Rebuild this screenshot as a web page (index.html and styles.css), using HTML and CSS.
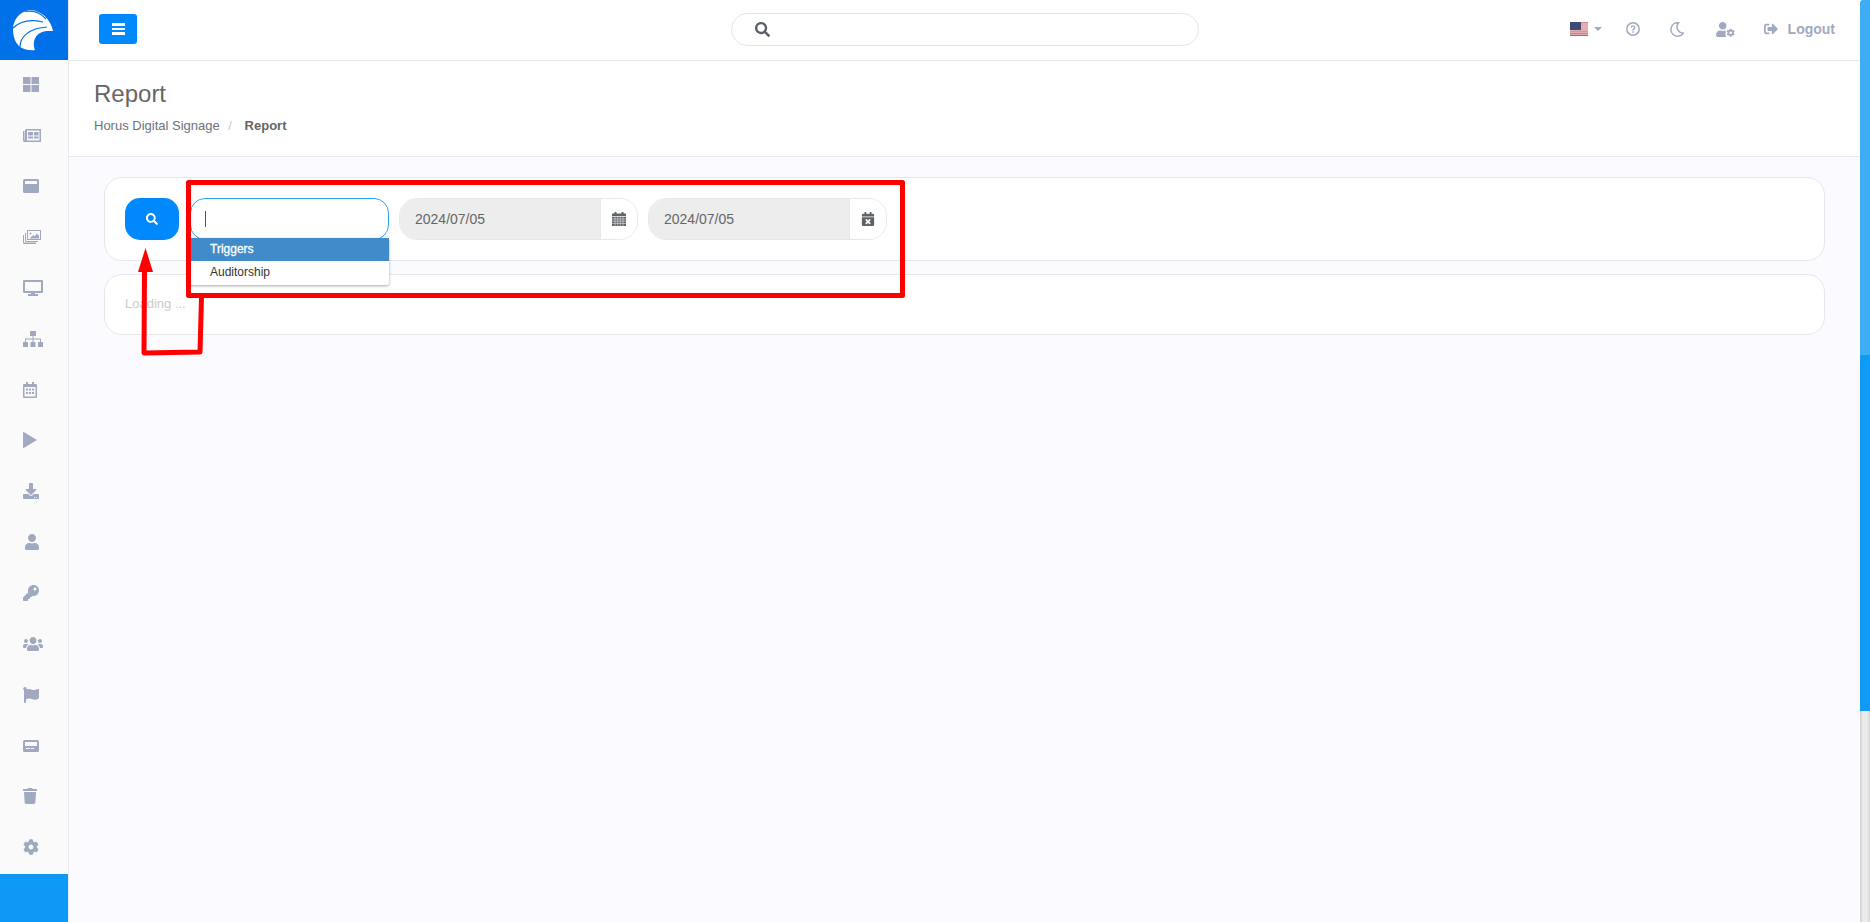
FILE: index.html
```html
<!DOCTYPE html>
<html lang="en">
<head>
<meta charset="utf-8">
<title>Report</title>
<link rel="stylesheet" href="styles.css">
</head>
<body>
<aside class="sidebar">
  <div class="logo">
    <svg class="logo-mark" viewBox="0 0 68 60">
      <path class="logo-body" d="M53 31C51 20 42 10.500 30 10 20 11 13 20 13 29c0 9 3 16 9 19 4 2 9 2.500 13 2C32 42 35 32 47 31z"/>
      <path class="logo-cut" d="M13 28C20 21 31 19 43 22"/>
      <path class="logo-cut" d="M20 47C20 37 29 28 47 27"/>
      <path class="logo-cut" d="M25 11.500C33 10 41 13 46 19"/>
    </svg>
  </div>
  <nav class="rail">
    <a class="rail-item"><svg class="ic w16" viewBox="0 0 16 15"><rect width="7.500" height="7"/><rect x="8.500" width="7.500" height="7"/><rect y="8" width="7.500" height="7"/><rect x="8.500" y="8" width="7.500" height="7"/></svg></a>
    <a class="rail-item"><svg class="ic w18" viewBox="0 0 18 13"><path d="M3 0h15v13H1.500A1.500 1.500 0 0 1 0 11.500V2h1.500v9H2V1z"/><rect class="cut" x="4" y="1.500" width="12.500" height="10"/><rect x="5" y="3" width="5" height="3.500"/><rect x="11" y="3" width="4.500" height="3.500"/><rect x="5" y="7.500" width="5" height="2"/><rect x="11" y="7.500" width="4.500" height="2"/></svg></a>
    <a class="rail-item"><svg class="ic w16" viewBox="0 0 16 14"><rect width="16" height="14" rx="1.500"/><rect class="cut" x="2" y="2" width="12" height="3"/></svg></a>
    <a class="rail-item"><svg class="ic w18" viewBox="0 0 18 14"><path d="M2 3h1v8h12v1H3.500A1.500 1.500 0 0 1 2 10.500zM0 5h1v7.500h12V14H1.500A1.500 1.500 0 0 1 0 12.500z"/><path d="M4 0h14v10H4z"/><rect class="cut" x="5" y="1" width="12" height="8"/><path d="M7 8l3-3 1.500 1.500L14 3.500 16 6v2.500H7z"/><circle cx="7.500" cy="3.500" r="1"/></svg></a>
    <a class="rail-item"><svg class="ic w20" viewBox="0 0 20 16"><path d="M1 0h18a1 1 0 0 1 1 1v11a1 1 0 0 1-1 1h-7v1h3v2H5v-2h3v-1H1a1 1 0 0 1-1-1V1a1 1 0 0 1 1-1z"/><rect class="cut" x="2" y="2" width="16" height="9"/></svg></a>
    <a class="rail-item"><svg class="ic w20" viewBox="0 0 20 16"><rect x="7" width="6" height="5"/><rect y="11" width="5" height="5"/><rect x="7.500" y="11" width="5" height="5"/><rect x="15" y="11" width="5" height="5"/><path d="M9.500 5h1v2.500H18V11h-1V8.500h-6.500V11h-1V8.500H3V11H2V7.500h7.500z"/></svg></a>
    <a class="rail-item"><svg class="ic w14" viewBox="0 0 14 16"><path d="M3 0h2v2h4V0h2v2h2a1 1 0 0 1 1 1v12a1 1 0 0 1-1 1H1a1 1 0 0 1-1-1V3a1 1 0 0 1 1-1h2z"/><rect class="cut" x="1.500" y="5" width="11" height="9.500"/><rect x="3" y="6.500" width="2" height="2"/><rect x="6" y="6.500" width="2" height="2"/><rect x="9" y="6.500" width="2" height="2"/><rect x="3" y="10" width="2" height="2"/><rect x="6" y="10" width="2" height="2"/><rect x="9" y="10" width="2" height="2"/></svg></a>
    <a class="rail-item"><svg class="ic w14" viewBox="0 0 14 16"><path d="M0 .5v15a.5.5 0 0 0 .7.4L14 8 .7.100A.5.5 0 0 0 0 .5z"/></svg></a>
    <a class="rail-item"><svg class="ic w16" viewBox="0 0 512 512"><path d="M216 0h80c13.300 0 24 10.700 24 24v168h87.700c17.800 0 26.700 21.500 14.100 34.100L269.700 378.300c-7.500 7.500-19.800 7.500-27.300 0L90.100 226.100c-12.600-12.600-3.700-34.100 14.100-34.100H192V24c0-13.300 10.700-24 24-24zm296 376v112c0 13.300-10.700 24-24 24H24c-13.300 0-24-10.700-24-24V376c0-13.300 10.700-24 24-24h146.700l49 49c20.100 20.100 52.500 20.100 72.600 0l49-49H488c13.300 0 24 10.700 24 24zm-124 88c0-11-9-20-20-20s-20 9-20 20 9 20 20 20 20-9 20-20zm64 0c0-11-9-20-20-20s-20 9-20 20 9 20 20 20 20-9 20-20z"/></svg></a>
    <a class="rail-item"><svg class="ic w14 off2" viewBox="0 0 448 512"><path d="M224 256c70.700 0 128-57.300 128-128S294.700 0 224 0 96 57.300 96 128s57.300 128 128 128zm89.600 32h-16.700c-22.200 10.200-46.900 16-72.900 16s-50.600-5.800-72.900-16h-16.700C60.200 288 0 348.200 0 422.400V464c0 26.500 21.500 48 48 48h352c26.500 0 48-21.500 48-48v-41.600c0-74.200-60.200-134.400-134.400-134.400z"/></svg></a>
    <a class="rail-item"><svg class="ic w16" viewBox="0 0 512 512"><path d="M512 176.001C512 273.203 433.202 352 336 352c-11.220 0-22.190-1.062-32.827-3.069l-24.012 27.014A23.999 23.999 0 0 1 261.223 384H224v40c0 13.255-10.745 24-24 24h-40v40c0 13.255-10.745 24-24 24H24c-13.255 0-24-10.745-24-24v-78.059c0-6.365 2.529-12.470 7.029-16.971l161.802-161.802C163.108 213.814 160 195.271 160 176 160 78.798 238.797.001 335.999 0 433.488-.001 512 78.511 512 176.001zM336 128c0 26.510 21.490 48 48 48s48-21.490 48-48-21.490-48-48-48-48 21.490-48 48z"/></svg></a>
    <a class="rail-item"><svg class="ic w20" viewBox="0 0 640 512"><path d="M96 224c35.300 0 64-28.700 64-64s-28.700-64-64-64-64 28.700-64 64 28.700 64 64 64zm448 0c35.300 0 64-28.700 64-64s-28.700-64-64-64-64 28.700-64 64 28.700 64 64 64zm32 32h-64c-17.600 0-33.500 7.100-45.100 18.600 40.300 22.100 68.900 62 75.100 109.400h66c17.700 0 32-14.300 32-32v-32c0-35.300-28.700-64-64-64zm-256 0c61.900 0 112-50.100 112-112S381.900 32 320 32 208 82.100 208 144s50.100 112 112 112zm76.800 32h-8.300c-20.800 10-43.900 16-68.500 16s-47.600-6-68.500-16h-8.300C179.600 288 128 339.600 128 403.200V432c0 26.500 21.500 48 48 48h288c26.500 0 48-21.500 48-48v-28.800c0-63.600-51.600-115.200-115.200-115.200zm-223.700-13.400C161.500 263.100 145.600 256 128 256H64c-35.300 0-64 28.700-64 64v32c0 17.700 14.300 32 32 32h65.900c6.300-47.400 34.900-87.300 75.200-109.400z"/></svg></a>
    <a class="rail-item"><svg class="ic w16" viewBox="0 0 512 512"><path d="M349.565 98.783C295.978 98.783 251.721 64 184.348 64c-24.955 0-47.309 4.384-68.045 12.013a55.947 55.947 0 0 0 3.586-23.562C118.117 24.015 94.806 1.206 66.338.048 34.345-1.254 8 24.296 8 56c0 19.026 9.497 35.825 24 45.945V488c0 13.255 10.745 24 24 24h16c13.255 0 24-10.745 24-24v-94.400c28.311-12.064 63.582-22.122 114.435-22.122 53.588 0 97.844 34.783 165.217 34.783 48.169 0 86.667-16.294 122.505-40.858C506.840 359.452 512 349.571 512 339.045v-243.100c0-23.393-24.269-38.870-45.485-29.016-34.338 15.948-76.454 31.854-116.950 31.854z"/></svg></a>
    <a class="rail-item"><svg class="ic w16" viewBox="0 0 16 12"><rect width="16" height="12" rx="1.500"/><rect class="cut" x="2" y="2" width="12" height="4"/><rect class="cut" x="3" y="8" width="4" height="1"/><rect class="cut" x="8" y="8" width="3" height="1"/></svg></a>
    <a class="rail-item"><svg class="ic w14" viewBox="0 0 448 512"><path d="M432 32H312l-9.400-18.700A24 24 0 0 0 281.100 0H166.800a23.720 23.720 0 0 0-21.400 13.300L136 32H16A16 16 0 0 0 0 48v32a16 16 0 0 0 16 16h416a16 16 0 0 0 16-16V48a16 16 0 0 0-16-16zM53.200 467a48 48 0 0 0 47.900 45h245.800a48 48 0 0 0 47.900-45L416 128H32z"/></svg></a>
    <a class="rail-item"><svg class="ic w16" viewBox="0 0 512 512"><path d="M487.400 315.700l-42.600-24.600c4.300-23.200 4.300-47 0-70.200l42.600-24.600c4.900-2.800 7.100-8.600 5.500-14-11.100-35.600-30-67.800-54.700-94.600-3.800-4.100-10-5.100-14.800-2.300L380.800 110c-17.900-15.400-38.500-27.300-60.800-35.100V25.800c0-5.600-3.900-10.500-9.400-11.700-36.700-8.200-74.300-7.800-109.200 0-5.500 1.200-9.400 6.100-9.400 11.700V75c-22.200 7.900-42.800 19.800-60.800 35.100L88.700 85.500c-4.900-2.800-11-1.900-14.800 2.300-24.700 26.700-43.600 58.900-54.700 94.600-1.700 5.400.6 11.200 5.500 14L67.300 221c-4.300 23.200-4.300 47 0 70.200l-42.600 24.600c-4.900 2.800-7.100 8.600-5.500 14 11.100 35.600 30 67.800 54.700 94.600 3.800 4.100 10 5.100 14.800 2.300l42.600-24.600c17.900 15.400 38.500 27.300 60.800 35.100v49.200c0 5.600 3.900 10.500 9.400 11.700 36.700 8.200 74.300 7.800 109.200 0 5.500-1.200 9.400-6.100 9.400-11.700v-49.200c22.200-7.900 42.800-19.800 60.800-35.100l42.600 24.600c4.900 2.800 11 1.900 14.800-2.300 24.700-26.700 43.600-58.900 54.700-94.600 1.500-5.500-.7-11.300-5.600-14.100zM256 336c-44.100 0-80-35.900-80-80s35.900-80 80-80 80 35.900 80 80-35.900 80-80 80z"/></svg></a>
  </nav>
  <div class="rail-foot"></div>
</aside>

<div class="main">
  <header class="topbar">
    <div class="topbar-left">
      <button class="burger"><span></span><span></span><span></span></button>
    </div>
    <div class="global-search">
      <svg class="glass-dark" viewBox="0 0 512 512"><path d="M505 442.700L405.300 343c-4.500-4.500-10.600-7-17-7H372c27.600-35.300 44-79.700 44-128C416 93.100 322.900 0 208 0S0 93.100 0 208s93.100 208 208 208c48.300 0 92.700-16.400 128-44v16.300c0 6.400 2.500 12.500 7 17l99.700 99.700c9.400 9.400 24.600 9.400 33.900 0l28.300-28.300c9.400-9.400 9.400-24.600.1-34zM208 336c-70.700 0-128-57.200-128-128 0-70.700 57.200-128 128-128 70.700 0 128 57.200 128 128 0 70.700-57.200 128-128 128z"/></svg>
    </div>
    <div class="topbar-right">
      <div class="lang">
        <svg class="flag" viewBox="0 0 18 14">
          <rect width="18" height="14" fill="#e6adb1"/>
          <rect y="0" width="18" height="1" fill="#d9848a"/><rect y="13" width="18" height="1" fill="#d9505c"/><rect y="11" width="18" height="1" fill="#e07880"/><rect y="9" width="18" height="1" fill="#e39198"/>
          <rect width="11" height="8" fill="#3c4a78"/>
        </svg>
        <span class="caret"></span>
      </div>
      <svg class="tool help" viewBox="0 0 14 14"><circle cx="7" cy="7" r="6.200" fill="none" stroke="#a1a9c0" stroke-width="1.500"/><path d="M4.700 5.500C4.700 4.100 5.800 3.300 7 3.300s2.400.8 2.400 2.100c0 1.700-1.700 1.700-1.700 3H6.300c0-2.200 1.700-2.100 1.700-3 0-.5-.5-.8-1-.8s-1 .3-1 .9zM6.300 9.200h1.400v1.500H6.300z"/></svg>
      <svg class="tool moon" viewBox="0 0 14 15"><path d="M8.500.8A6.700 6.700 0 1 0 13.400 11 6.200 6.200 0 0 1 8.500.8z" fill="none" stroke="#a1a9c0" stroke-width="1.500"/></svg>
      <svg class="tool usercog" viewBox="0 0 640 512"><path d="M224 256c70.700 0 128-57.300 128-128S294.700 0 224 0 96 57.300 96 128s57.300 128 128 128zm89.600 32h-16.700c-22.200 10.200-46.900 16-72.900 16s-50.600-5.800-72.900-16h-16.700C60.200 288 0 348.200 0 422.400V464c0 26.500 21.500 48 48 48h300c-30-30-40-90-20-170-5-20-10-54-14.400-54z"/><g transform="translate(352 224) scale(.56)"><path d="M487.400 315.700l-42.600-24.600c4.300-23.200 4.300-47 0-70.200l42.600-24.600c4.900-2.800 7.100-8.600 5.500-14-11.100-35.600-30-67.800-54.700-94.600-3.800-4.100-10-5.100-14.800-2.300L380.800 110c-17.900-15.400-38.500-27.300-60.800-35.100V25.800c0-5.600-3.900-10.500-9.400-11.700-36.700-8.200-74.300-7.800-109.200 0-5.500 1.200-9.400 6.100-9.400 11.700V75c-22.200 7.900-42.800 19.800-60.800 35.100L88.700 85.500c-4.900-2.800-11-1.900-14.800 2.300-24.700 26.700-43.600 58.900-54.700 94.600-1.700 5.400.6 11.200 5.500 14L67.300 221c-4.300 23.200-4.300 47 0 70.200l-42.600 24.600c-4.900 2.800-7.100 8.600-5.500 14 11.100 35.600 30 67.800 54.700 94.600 3.800 4.100 10 5.100 14.800 2.300l42.600-24.600c17.900 15.400 38.500 27.300 60.800 35.100v49.200c0 5.600 3.900 10.500 9.400 11.700 36.700 8.200 74.300 7.800 109.200 0 5.500-1.200 9.400-6.100 9.400-11.700v-49.200c22.200-7.900 42.800-19.800 60.800-35.100l42.600 24.600c4.900 2.800 11 1.900 14.800-2.300 24.700-26.700 43.600-58.900 54.700-94.600 1.500-5.500-.7-11.300-5.600-14.100zM256 336c-44.100 0-80-35.900-80-80s35.900-80 80-80 80 35.900 80 80-35.900 80-80 80z"/></g></svg>
      <a class="logout">
        <svg class="tool signout" viewBox="0 0 512 512"><path d="M497 273L329 441c-15 15-41 4.500-41-17v-96H152c-13.300 0-24-10.700-24-24v-96c0-13.300 10.700-24 24-24h136V88c0-21.400 25.900-32 41-17l168 168c9.300 9.400 9.300 24.600 0 34zM192 436v-40c0-6.600-5.400-12-12-12H96c-17.700 0-32-14.300-32-32V160c0-17.700 14.300-32 32-32h84c6.600 0 12-5.400 12-12V76c0-6.600-5.400-12-12-12H96c-53 0-96 43-96 96v192c0 53 43 96 96 96h84c6.600 0 12-5.400 12-12z"/></svg>
        <span>Logout</span>
      </a>
    </div>
  </header>

  <section class="page-head">
    <h1 class="page-title">Report</h1>
    <div class="crumbs">
      <span>Horus Digital Signage</span>
      <span class="crumb-sep">/</span>
      <strong>Report</strong>
    </div>
  </section>

  <main class="content">
    <div class="card filter-card">
      <button class="go"><svg viewBox="0 0 512 512"><path d="M505 442.700L405.300 343c-4.500-4.500-10.600-7-17-7H372c27.600-35.300 44-79.700 44-128C416 93.100 322.900 0 208 0S0 93.100 0 208s93.100 208 208 208c48.300 0 92.700-16.400 128-44v16.300c0 6.400 2.500 12.500 7 17l99.700 99.700c9.400 9.400 24.600 9.400 33.900 0l28.300-28.300c9.400-9.400 9.400-24.600.1-34zM208 336c-70.700 0-128-57.200-128-128 0-70.700 57.200-128 128-128 70.700 0 128 57.200 128 128 0 70.700-57.200 128-128 128z"/></svg></button>
      <div class="combo">
        <div class="combo-input"><span class="text-caret"></span></div>
        <ul class="combo-menu">
          <li class="combo-item active">Triggers</li>
          <li class="combo-item">Auditorship</li>
        </ul>
      </div>
      <div class="date-group">
        <div class="date-value">2024/07/05</div>
        <div class="date-addon">
          <svg class="cal" viewBox="0 0 14 14"><path d="M2.500 0h2v1.500h5V0h2v1.500H14V4H0V1.500h2.500zM0 4.800h14V14H0z"/><path class="cal-lines" d="M0 7h14M0 9.200h14M0 11.400h14M3 5v9M5.700 5v9M8.300 5v9M11 5v9"/></svg>
        </div>
      </div>
      <div class="date-group">
        <div class="date-value">2024/07/05</div>
        <div class="date-addon">
          <svg class="cal" viewBox="0 0 448 512"><path d="M436 160H12c-6.600 0-12-5.400-12-12v-36c0-26.500 21.500-48 48-48h48V12c0-6.600 5.400-12 12-12h40c6.600 0 12 5.400 12 12v52h128V12c0-6.600 5.400-12 12-12h40c6.600 0 12 5.400 12 12v52h48c26.500 0 48 21.500 48 48v36c0 6.600-5.400 12-12 12zM12 192h424c6.600 0 12 5.400 12 12v260c0 26.500-21.500 48-48 48H48c-26.500 0-48-21.500-48-48V204c0-6.600 5.400-12 12-12zm257.300 160l48.100-48.100c4.700-4.700 4.700-12.300 0-17l-28.300-28.300c-4.700-4.700-12.300-4.700-17 0L224 306.700l-48.100-48.100c-4.700-4.700-12.300-4.700-17 0l-28.300 28.300c-4.700 4.700-4.700 12.300 0 17l48.100 48.100-48.100 48.100c-4.700 4.700-4.700 12.300 0 17l28.300 28.300c4.700 4.700 12.300 4.700 17 0l48.100-48.100 48.100 48.100c4.700 4.700 12.300 4.700 17 0l28.300-28.300c4.700-4.700 4.700-12.300 0-17L269.300 352z"/></svg>
        </div>
      </div>
    </div>
    <div class="card loading-card">Loading ...</div>
  </main>
</div>

<div class="scroll-strip">
  <div class="strip-light"></div>
  <div class="strip-blue"></div>
  <div class="strip-track"></div>
</div>

<svg class="markup" viewBox="0 0 1870 922">
  <rect class="markup-line" x="188.500" y="182.500" width="714" height="113"/>
  <path class="markup-line" d="M201.500 298L200 352L144 353L144.500 270"/>
  <path class="markup-head" d="M145.500 248L153 272H138z"/>
</svg>
</body>
</html>
```

FILE: styles.css
```css
* { box-sizing: border-box; }
html, body { height: 100%; }
body {
  margin: 0;
  display: flex;
  height: 100vh;
  overflow: hidden;
  position: relative;
  font-family: "Liberation Sans", Arial, sans-serif;
  color: #666;
  background: #fbfafe;
}

/* left rail */
.sidebar {
  width: 69px;
  flex: none;
  display: flex;
  flex-direction: column;
  background: #fafafa;
  border-right: 1px solid #e8e9ee;
}
.logo {
  height: 60px;
  flex: none;
  background: #0071e8;
}
.logo-mark { display: block; width: 68px; height: 60px; }
.logo-body { fill: #fff; }
.logo-cut { fill: none; stroke: #0071e8; stroke-width: 1.200; }
.rail { flex: 1; display: flex; flex-direction: column; margin-top: -1px; }
.rail-item {
  height: 50.860px;
  flex: none;
  display: flex;
  align-items: center;
  padding-left: 23px;
}
.rail-foot { height: 48px; flex: none; background: #0d99f6; }
.ic { display: block; fill: #a1a9c0; }
.ic .cut { fill: #fafafa; }
.w14 { width: 14px; }
.w16 { width: 16px; }
.w18 { width: 18px; }
.w20 { width: 20px; }
.off2 { margin-left: 2px; }

/* main column */
.main {
  flex: 1;
  min-width: 0;
  display: flex;
  flex-direction: column;
}
.topbar {
  height: 61px;
  flex: none;
  display: grid;
  grid-template-columns: 1fr 468px 1fr;
  align-items: center;
  background: #fff;
  border-bottom: 1px solid #e8e9ec;
  padding-bottom: 1px;
}
.topbar-left { padding-left: 30px; }
.burger {
  width: 38px;
  height: 30px;
  margin-top: -1px;
  padding: 0;
  border: 0;
  border-radius: 3px;
  background: #0088fd;
  display: flex;
  flex-direction: column;
  align-items: center;
  justify-content: center;
  gap: 2px;
}
.burger span { display: block; width: 13px; height: 2.500px; background: #fff; }
.global-search {
  height: 33px;
  margin-top: -1px;
  border: 1px solid #e4e5e8;
  border-radius: 17px;
  display: flex;
  align-items: center;
  padding-left: 23px;
}
.glass-dark { width: 15px; height: 15px; fill: #5b6068; }
.topbar-right {
  display: flex;
  align-items: center;
  justify-content: flex-end;
  padding-right: 25px;
  margin-top: -1px;
}
.lang { display: flex; align-items: center; gap: 6px; margin-right: 24px; }
.flag { display: block; width: 18px; height: 14px; }
.caret {
  width: 0;
  height: 0;
  border-left: 4px solid transparent;
  border-right: 4px solid transparent;
  border-top: 4px solid #a1a9c0;
}
.tool { display: block; fill: #a1a9c0; flex: none; }
.help { width: 14px; height: 14px; margin-right: 30px; }
.moon { width: 14px; height: 15px; margin-right: 32px; }
.usercog { width: 19px; height: 15px; margin-right: 29px; }
.signout { width: 14px; height: 14px; }
.logout {
  display: flex;
  align-items: center;
  gap: 10px;
  font-size: 14px;
  font-weight: 700;
  color: #a1a9c0;
}

/* page heading */
.page-head {
  height: 96px;
  flex: none;
  background: #fff;
  border-bottom: 1px solid #e8e9f0;
  padding: 19px 25px 0;
}
.page-title {
  margin: 0;
  font-size: 24px;
  font-weight: 400;
  line-height: 28px;
  color: #666;
}
.crumbs {
  margin-top: 8px;
  font-size: 13px;
  line-height: 20px;
  color: #6c7280;
}
.crumbs strong { color: #666; }
.crumb-sep { margin: 0 9px 0 5px; color: #c8c8c8; }

/* content */
.content {
  flex: 1;
  padding: 20px 35px;
  display: flex;
  flex-direction: column;
  gap: 13px;
}
.card {
  background: #fff;
  border: 1px solid #e6e7ec;
  border-radius: 18px;
}
.filter-card {
  height: 84px;
  padding: 20px;
  display: flex;
  align-items: flex-start;
}
.go {
  width: 54px;
  height: 42px;
  padding: 0;
  border: 0;
  border-radius: 15px;
  background: #0088fd;
  display: flex;
  align-items: center;
  justify-content: center;
  margin-right: 11px;
}
.go svg { width: 12px; height: 12px; fill: #fff; }
.combo { position: relative; width: 199px; margin-right: 10px; }
.combo-input {
  height: 42px;
  border: 1px solid #2ba4ee;
  border-radius: 15px;
  background: #fff;
  padding: 12px 14px;
}
.text-caret { display: block; width: 1px; height: 16px; background: #555; }
.combo-menu {
  position: absolute;
  left: 0;
  top: 40px;
  width: 199px;
  margin: 0;
  padding: 0;
  list-style: none;
  background: #fff;
  border-radius: 2px;
  box-shadow: 0 1px 3px rgba(0, 0, 0, .35);
  font-size: 12px;
}
.combo-item { height: 24px; line-height: 22px; padding-left: 20px; color: #333; }
.combo-item.active { height: 23px; background: #428bca; color: #fff; -webkit-text-stroke: .3px #fff; }
.date-group {
  width: 239px;
  height: 42px;
  margin-right: 10px;
  display: flex;
  border: 1px solid #e8e8ea;
  border-radius: 18px;
  overflow: hidden;
  font-size: 14px;
}
.date-value {
  flex: 1;
  background: #ededed;
  padding-left: 15px;
  line-height: 40px;
  color: #666;
}
.date-addon {
  width: 37px;
  flex: none;
  display: flex;
  align-items: center;
  justify-content: center;
  background: #fff;
  border-left: 1px solid #e8e8ea;
}
.cal { display: block; width: 14px; height: 14px; fill: #5f6368; }
.cal-lines { fill: none; stroke: #fff; stroke-width: .5; }
.loading-card {
  height: 61px;
  padding: 20px 20px 0;
  font-size: 13px;
  line-height: 18px;
  color: #c9cacd;
}

/* scrollbar strip */
.scroll-strip {
  width: 10px;
  flex: none;
  display: flex;
  flex-direction: column;
}
.strip-light { height: 355px; background: #3daef5; border-top-left-radius: 3px; }
.strip-blue { height: 356px; background: #0f9af3; }
.strip-track {
  flex: 1;
  background: linear-gradient(90deg, #cfcfcf, #ececec 30%, #ececec 70%, #d6d6d6);
}

/* red annotation over the page */
.markup {
  position: absolute;
  left: 0;
  top: 0;
  width: 1870px;
  height: 922px;
  pointer-events: none;
}
.markup-line { fill: none; stroke: #f00; stroke-width: 5; stroke-linejoin: round; }
.markup-head { fill: #f00; }
```
